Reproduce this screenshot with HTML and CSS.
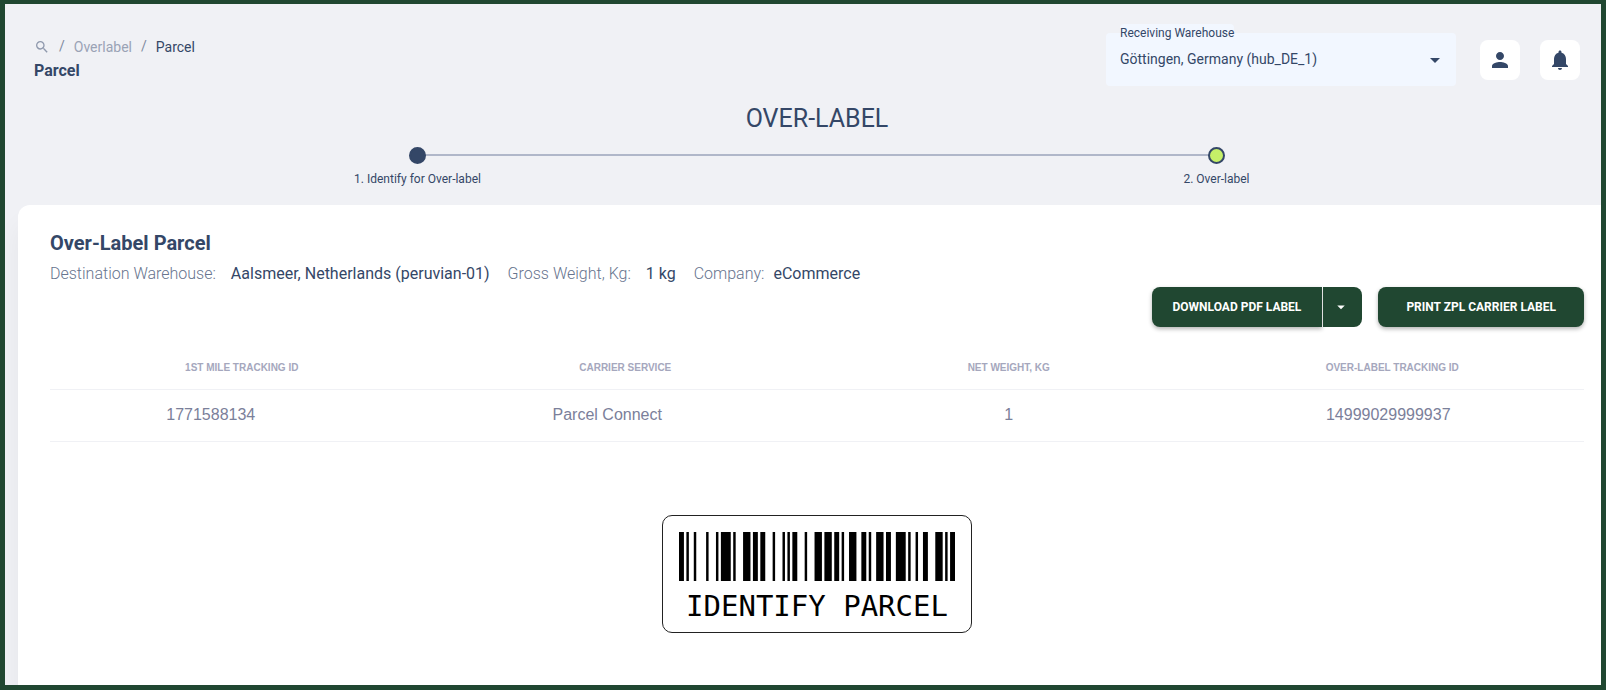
FILE: index.html
```html
<!DOCTYPE html>
<html lang="en">
<head>
<meta charset="utf-8">
<title>Over-Label Parcel</title>
<link rel="stylesheet" href="styles.css">
</head>
<body class="app">
<div class="page">
  <header class="topbar">
    <div class="crumbs">
      <nav class="crumb-list" aria-label="Breadcrumb">
        <a class="crumb-search" href="#" aria-label="Search"><svg width="16" height="16" viewBox="0 0 24 24"><path fill="currentColor" d="M15.5 14h-.79l-.28-.27A6.471 6.471 0 0 0 16 9.500 6.500 6.500 0 1 0 9.500 16c1.610 0 3.090-.59 4.230-1.570l.27.28v.79l5 4.990L20.490 19zm-6 0C7.010 14 5 11.990 5 9.500S7.010 5 9.500 5 14 7.010 14 9.500 11.990 14 9.500 14"/></svg></a>
        <span class="slash">/</span>
        <a class="crumb" href="#">Overlabel</a>
        <span class="slash">/</span>
        <span class="crumb-current">Parcel</span>
      </nav>
      <h1 class="page-name">Parcel</h1>
    </div>
    <div class="tools">
      <div class="field">
        <label class="field-label" for="warehouse">Receiving Warehouse</label>
        <select class="field-select" id="warehouse"><option>Göttingen, Germany (hub_DE_1)</option></select>
        <svg class="field-arrow" width="24" height="24" viewBox="0 0 24 24"><path fill="currentColor" d="M7 10l5 5 5-5z"/></svg>
      </div>
      <button class="icon-button" type="button" aria-label="Account"><svg width="24" height="24" viewBox="0 0 24 24"><path fill="currentColor" d="M12 12c2.210 0 4-1.790 4-4s-1.790-4-4-4-4 1.790-4 4 1.790 4 4 4m0 2c-2.670 0-8 1.340-8 4v2h16v-2c0-2.660-5.330-4-8-4"/></svg></button>
      <button class="icon-button" type="button" aria-label="Notifications"><svg width="24" height="24" viewBox="0 0 24 24"><path fill="currentColor" d="M12 22c1.100 0 2-.9 2-2h-4c0 1.100.89 2 2 2m6-6v-5c0-3.070-1.640-5.640-4.500-6.320V4c0-.83-.67-1.500-1.500-1.500s-1.500.67-1.500 1.500v.68C7.630 5.360 6 7.920 6 11v5l-2 2v1h16v-1z"/></svg></button>
    </div>
  </header>

  <section class="progress">
    <h2 class="progress-title">OVER-LABEL</h2>
    <ol class="steps">
      <li class="step"><span class="dot"></span><span>1. Identify for Over-label</span></li>
      <li class="step step-active"><span class="dot"></span><span>2. Over-label</span></li>
    </ol>
  </section>

  <main class="card">
    <h2 class="card-title">Over-Label Parcel</h2>
    <dl class="facts">
      <div class="fact"><dt>Destination Warehouse:</dt><dd>Aalsmeer, Netherlands (peruvian-01)</dd></div>
      <div class="fact"><dt>Gross Weight, Kg:</dt><dd>1 kg</dd></div>
      <div class="fact fact-tight"><dt>Company:</dt><dd>eCommerce</dd></div>
    </dl>
    <div class="actions">
      <div class="split">
        <button class="button button-main" type="button">DOWNLOAD PDF LABEL</button>
        <button class="button button-more" type="button" aria-label="More formats"><svg width="18" height="18" viewBox="0 0 24 24"><path fill="currentColor" d="M7 10l5 5 5-5z"/></svg></button>
      </div>
      <button class="button button-print" type="button">PRINT ZPL CARRIER LABEL</button>
    </div>
    <table class="parcels">
      <thead>
        <tr><th>1ST MILE TRACKING ID</th><th>CARRIER SERVICE</th><th>NET WEIGHT, KG</th><th>OVER-LABEL TRACKING ID</th></tr>
      </thead>
      <tbody>
        <tr><td class="cell-mile">1771588134</td><td class="cell-service">Parcel Connect</td><td>1</td><td class="cell-tracking">14999029999937</td></tr>
      </tbody>
    </table>
    <div class="barcode">
      <svg class="bars" viewBox="0 0 112 20" preserveAspectRatio="none" aria-hidden="true"><path d="M0 0h2v20h-2zM3 0h1v20h-1zM6 0h1v20h-1zM11 0h1v20h-1zM15 0h1v20h-1zM17 0h4v20h-4zM22 0h1v20h-1zM26 0h3v20h-3zM30 0h2v20h-2zM33 0h2v20h-2zM38 0h1v20h-1zM42 0h1v20h-1zM44 0h1v20h-1zM46 0h2v20h-2zM51 0h1v20h-1zM55 0h3v20h-3zM59 0h3v20h-3zM63 0h2v20h-2zM66 0h1v20h-1zM69 0h3v20h-3zM74 0h2v20h-2zM77 0h1v20h-1zM80 0h3v20h-3zM84 0h2v20h-2zM88 0h4v20h-4zM93 0h1v20h-1zM96 0h1v20h-1zM99 0h2v20h-2zM104 0h3v20h-3zM108 0h1v20h-1zM110 0h2v20h-2z"/></svg>
      <span class="barcode-text">IDENTIFY PARCEL</span>
    </div>
  </main>
</div>
</body>
</html>
```
FILE: styles.css
```css
* { box-sizing: border-box; }

.app {
  margin: 0;
  min-height: 100vh;
  display: flex;
  border: 5px solid #204731;
  border-top-width: 4px;
  background: #f0f1f5;
  color: #344767;
  font-family: Roboto, "Liberation Sans", sans-serif;
  overflow: hidden;
}

.page {
  flex: 1;
  min-width: 0;
  display: flex;
  flex-direction: column;
  margin: 0 -15px 0 13px;
}

.topbar {
  display: flex;
  justify-content: space-between;
  padding: 29px 36px 0 16px;
}
.crumbs { padding-top: 4px; }
.crumb-list { display: flex; align-items: center; gap: 9px; font-size: 14px; line-height: 20px; }
.crumb-search { display: flex; color: #8f99ad; }
.crumb, .slash { color: #9aa3b5; text-decoration: none; }
.slash { color: #7f8a9f; line-height: 16px; padding-bottom: 3px; }
.crumb-current { color: #344767; }
.page-name { margin: 2px 0 0; font-size: 16px; line-height: 24px; font-weight: 700; }

.tools { display: flex; align-items: flex-start; }
.field { position: relative; width: 350px; margin-right: 24px; }
.field-label {
  position: absolute;
  left: 14px;
  top: -9px;
  border-radius: 4px;
  background: #f2f7ff;
  font-size: 12px;
  line-height: 19px;
}
.field-select {
  display: block;
  width: 100%;
  height: 53px;
  padding: 0 40px 2px 14px;
  border: 0;
  border-radius: 4px;
  appearance: none;
  background: #f2f7ff;
  color: inherit;
  font: 14px Roboto, "Liberation Sans", sans-serif;
}
.field-arrow { position: absolute; right: 9px; top: 15px; pointer-events: none; }
.icon-button {
  display: flex;
  align-items: center;
  justify-content: center;
  width: 40px;
  height: 40px;
  margin-top: 7px;
  padding: 0;
  border: 0;
  border-radius: 8px;
  background: #fff;
  color: #344767;
}
.icon-button + .icon-button { margin-left: 20px; }

.progress-title { margin: 16px 0 0; font-size: 25px; line-height: 34px; font-weight: 400; text-align: center; }
.steps { display: flex; margin: 11px 0 0; padding: 0; list-style: none; }
.step {
  position: relative;
  flex: 1;
  display: flex;
  flex-direction: column;
  align-items: center;
  gap: 7px;
  font-size: 12px;
  line-height: 16px;
}
.dot {
  position: relative;
  width: 17px;
  height: 17px;
  border: 2px solid #344767;
  border-radius: 50%;
  background: #344767;
}
.step-active .dot { background: #c6f068; }
.step-active::before {
  content: "";
  position: absolute;
  top: 7px;
  right: 50%;
  width: 100%;
  height: 2px;
  background: #b0b7c9;
}
.step:first-child { z-index: 1; }

.card {
  flex: 1;
  display: flex;
  flex-direction: column;
  margin-top: 18px;
  padding: 24px 32px 32px;
  border-radius: 12px 12px 0 0;
  background: #fff;
  box-shadow: 0 20px 27px rgba(0, 0, 0, 0.05);
}
.card-title { margin: 0; font-size: 20px; line-height: 28px; font-weight: 700; }
.facts { display: flex; gap: 18px; margin: 5px 0 0; font-size: 16px; line-height: 24px; }
.fact { display: flex; gap: 15px; }
.fact-tight { gap: 9px; }
.fact dt { font-weight: 300; color: #67748e; }
.fact dd { margin: 0; }

.actions { display: flex; justify-content: flex-end; gap: 16px; margin-top: 1px; }
.split { display: flex; gap: 1px; }
.button {
  height: 40px;
  border: 0;
  border-radius: 8px;
  background: #204731;
  color: #fff;
  font: 700 12px Roboto, "Liberation Sans", sans-serif;
  box-shadow: 0 2px 4px rgba(0, 0, 0, 0.3);
}
.button-main { padding: 0 21px; border-radius: 8px 0 0 8px; }
.button-more {
  display: flex;
  align-items: center;
  justify-content: center;
  width: 39px;
  padding: 0 4px 0 0;
  border-radius: 0 8px 8px 0;
  box-shadow: none;
}
.button-print { padding: 0 28px; }

.parcels {
  width: 100%;
  margin-top: 17px;
  border-collapse: collapse;
  table-layout: fixed;
  font-family: "Liberation Sans", Arial, sans-serif;
  text-align: center;
}
.parcels th {
  height: 45px;
  padding: 2px 0 0;
  border-bottom: 1px solid #f0f1f5;
  color: #a5a7bd;
  font-size: 10px;
}
.parcels td {
  height: 52px;
  padding: 0;
  border-bottom: 1px solid #f0f1f5;
  color: #7b809a;
  font-size: 16px;
}
.parcels .cell-mile { padding-right: 62px; }
.parcels .cell-service { padding-right: 36px; }
.parcels .cell-tracking { padding-right: 8px; }

.barcode {
  align-self: center;
  display: flex;
  flex-direction: column;
  align-items: center;
  margin-top: 73px;
  padding: 16px 16px 4px;
  border: 1px solid #222;
  border-radius: 10px;
  color: #000;
}
.bars { width: 276px; height: 49px; }
.barcode-text { padding-top: 4px; font: 29px/43px "DejaVu Sans Mono", monospace; }
```
